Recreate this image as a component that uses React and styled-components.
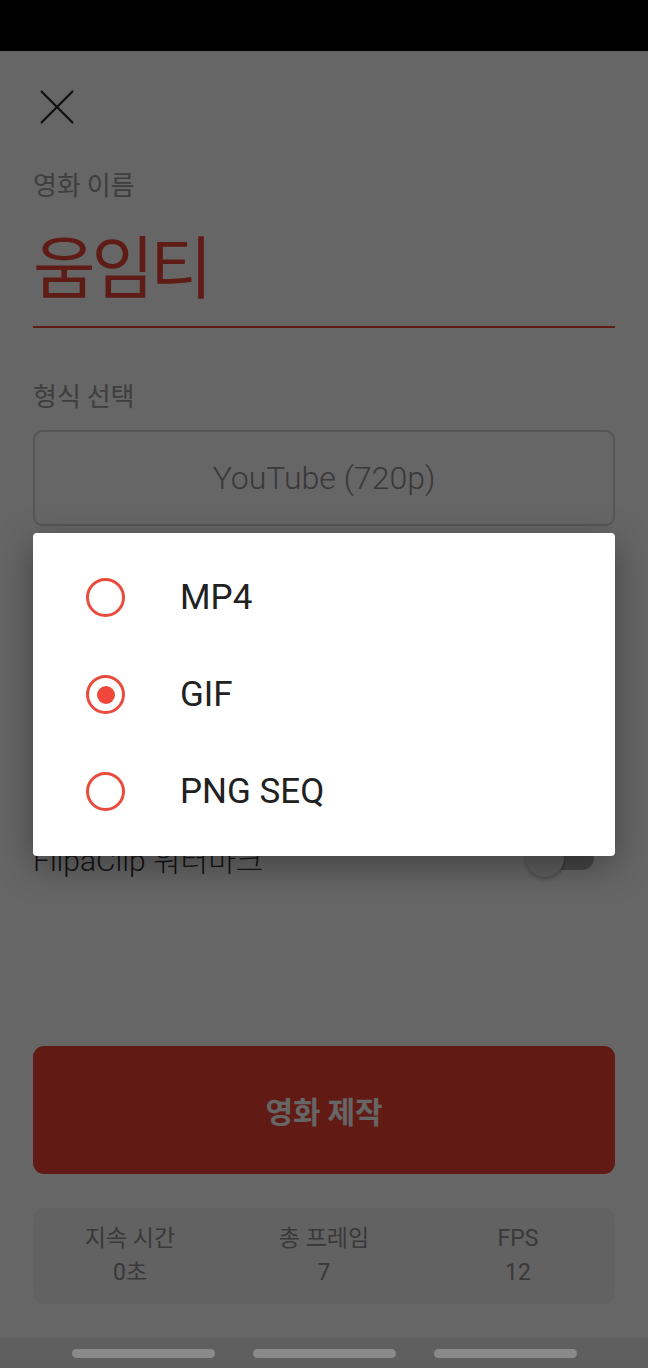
import styled, { createGlobalStyle } from 'styled-components';

const formats = ['MP4', 'GIF', 'PNG SEQ'];
const selected = 'GIF';

const stats = [
  { label: '지속 시간', value: '0초' },
  { label: '총 프레임', value: '7' },
  { label: 'FPS', value: '12' },
];

function App() {
  return (
    <>
      <GlobalStyle />
      <Screen>
        <StatusBar />
        <Content>
          <CloseButton>
            <svg width="34" height="34" viewBox="0 0 34 34">
              <path d="M1 1 L33 33 M33 1 L1 33" stroke="#262626" strokeWidth="2.2" fill="none" />
            </svg>
          </CloseButton>

          <FieldLabel $top={45}>영화 이름</FieldLabel>
          <TitleInput>움임티</TitleInput>

          <FieldLabel $top={52}>형식 선택</FieldLabel>
          <SelectBox>YouTube (720p)</SelectBox>

          <ToggleRow>
            <ToggleLabel>FlipaClip 워터마크</ToggleLabel>
            <Switch>
              <SwitchKnob />
            </Switch>
          </ToggleRow>

          <Bottom>
            <MakeButton>영화 제작</MakeButton>
            <StatsCard>
              {stats.map((s) => (
                <StatCol key={s.label}>
                  <StatText>{s.label}</StatText>
                  <StatText>{s.value}</StatText>
                </StatCol>
              ))}
            </StatsCard>
          </Bottom>
        </Content>

        <Scrim />

        <Dialog>
          {formats.map((f) => (
            <OptionRow key={f}>
              <Radio $checked={f === selected} />
              <OptionText>{f}</OptionText>
            </OptionRow>
          ))}
        </Dialog>

        <NavBar>
          <NavPill />
          <NavPill />
          <NavPill />
        </NavBar>
      </Screen>
    </>
  );
}

const GlobalStyle = createGlobalStyle`
  body {
    margin: 0;
    background: #000;
    font-family: Roboto, "Noto Sans CJK KR", sans-serif;
  }
`;

const Screen = styled.div`
  position: relative;
  width: 648px;
  height: 1368px;
  overflow: hidden;
  background: #fff;
  display: flex;
  flex-direction: column;
`;

const StatusBar = styled.div`
  height: 51px;
  background: #000;
  flex-shrink: 0;
`;

const Content = styled.div`
  flex: 1;
  display: flex;
  flex-direction: column;
  padding: 0 33px;
`;

const CloseButton = styled.div`
  width: 34px;
  height: 34px;
  margin: 39px 0 0 7px;

  svg {
    display: block;
  }
`;

const FieldLabel = styled.div`
  margin-top: ${(p) => p.$top}px;
  height: 30px;
  line-height: 30px;
  font-size: 26px;
  color: #9c9c9c;
  font-family: "Noto Sans CJK KR", Roboto, sans-serif;
`;

const TitleInput = styled.div`
  margin-top: 25px;
  height: 80px;
  line-height: 80px;
  padding-bottom: 22px;
  font-size: 68px;
  letter-spacing: -4px;
  color: #ee4536;
  font-family: "Noto Sans CJK KR", sans-serif;
  border-bottom: 2px solid #ee4536;
`;

const SelectBox = styled.div`
  margin-top: 20px;
  height: 96px;
  box-sizing: border-box;
  border: 2px solid #d8d8d8;
  border-radius: 9px;
  display: flex;
  align-items: center;
  justify-content: center;
  font-size: 32px;
  font-weight: 300;
  color: #8e8e8e;
`;

const ToggleRow = styled.div`
  margin-top: 302px;
  height: 60px;
  display: flex;
  align-items: center;
  justify-content: space-between;
`;

const ToggleLabel = styled.div`
  font-size: 30px;
  font-weight: 300;
  color: #333;
`;

const Switch = styled.div`
  position: relative;
  width: 56px;
  height: 24px;
  margin-right: 21px;
  border-radius: 12px;
  background: #b2b2b2;
`;

const SwitchKnob = styled.div`
  position: absolute;
  left: -12px;
  top: -7px;
  width: 38px;
  height: 38px;
  border-radius: 50%;
  background: #ececec;
  box-shadow: 0 2px 4px rgba(0, 0, 0, 0.3);
`;

const Bottom = styled.div`
  margin-top: auto;
  display: flex;
  flex-direction: column;
  gap: 34px;
  padding-bottom: 64px;
`;

const MakeButton = styled.div`
  height: 128px;
  border-radius: 11px;
  background: #f44336;
  color: #fff;
  display: flex;
  align-items: center;
  justify-content: center;
  font-size: 30px;
  font-weight: 700;
  font-family: "Noto Sans CJK KR", sans-serif;
`;

const StatsCard = styled.div`
  height: 96px;
  border-radius: 11px;
  background: #f5f5f5;
  display: grid;
  grid-template-columns: repeat(3, 1fr);
  align-items: center;
`;

const StatCol = styled.div`
  display: flex;
  flex-direction: column;
  align-items: center;
`;

const StatText = styled.div`
  height: 34px;
  line-height: 34px;
  font-size: 23px;
  color: #8e8e8e;
`;

const Scrim = styled.div`
  position: absolute;
  inset: 0;
  background: rgba(0, 0, 0, 0.6);
`;

const Dialog = styled.div`
  position: absolute;
  top: 533px;
  left: 33px;
  width: 582px;
  height: 323px;
  box-sizing: border-box;
  padding: 16px 0;
  background: #fff;
  border-radius: 4px;
  box-shadow: 0 10px 36px rgba(0, 0, 0, 0.35);
  display: flex;
  flex-direction: column;
`;

const OptionRow = styled.div`
  height: 97px;
  display: flex;
  align-items: center;
  padding-left: 53px;
  gap: 55px;
`;

const Radio = styled.span`
  position: relative;
  width: 39px;
  height: 39px;
  box-sizing: border-box;
  border: 3.5px solid #e94b3c;
  border-radius: 50%;

  &::after {
    content: '';
    display: ${(p) => (p.$checked ? 'block' : 'none')};
    position: absolute;
    left: 50%;
    top: 50%;
    width: 18px;
    height: 18px;
    margin: -9px 0 0 -9px;
    border-radius: 50%;
    background: #f0473a;
  }
`;

const OptionText = styled.span`
  font-size: 35px;
  color: #212121;
`;

const NavBar = styled.div`
  position: absolute;
  left: 0;
  right: 0;
  bottom: 0;
  height: 30px;
  background: #5f5f5f;
  display: flex;
  align-items: center;
  justify-content: center;
  gap: 38px;
`;

const NavPill = styled.div`
  width: 143px;
  height: 9px;
  border-radius: 5px;
  background: #8a8a8a;
`;

export default App;
